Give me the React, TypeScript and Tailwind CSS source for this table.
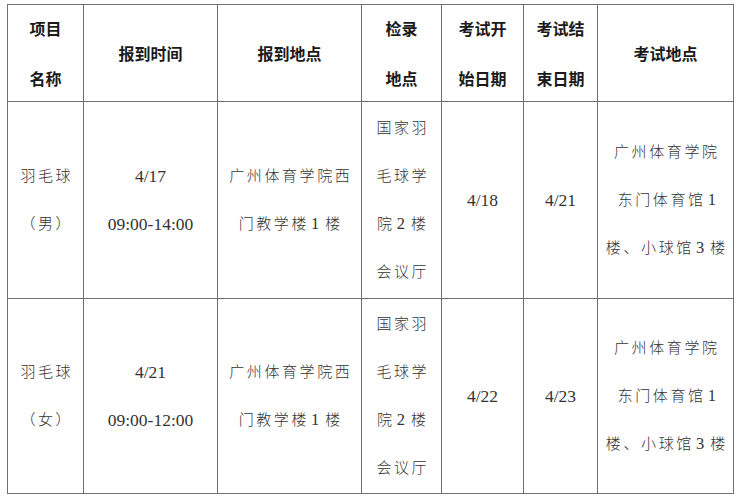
const serif = "[font-family:'Liberation_Serif','Noto_Sans_CJK_SC',serif]";

type Cell = { lines: string[]; num?: boolean };

const header: string[][] = [
  ["项目", "名称"],
  ["报到时间"],
  ["报到地点"],
  ["检录", "地点"],
  ["考试开", "始日期"],
  ["考试结", "束日期"],
  ["考试地点"],
];

const rows: Cell[][] = [
  [
    { lines: ["羽毛球", "（男）"] },
    { lines: ["4/17", "09:00-14:00"], num: true },
    { lines: ["广州体育学院西", "门教学楼 1 楼"] },
    { lines: ["国家羽", "毛球学", "院 2 楼", "会议厅"] },
    { lines: ["4/18"], num: true },
    { lines: ["4/21"], num: true },
    { lines: ["广州体育学院", "东门体育馆 1", "楼、小球馆 3 楼"] },
  ],
  [
    { lines: ["羽毛球", "（女）"] },
    { lines: ["4/21", "09:00-12:00"], num: true },
    { lines: ["广州体育学院西", "门教学楼 1 楼"] },
    { lines: ["国家羽", "毛球学", "院 2 楼", "会议厅"] },
    { lines: ["4/22"], num: true },
    { lines: ["4/23"], num: true },
    { lines: ["广州体育学院", "东门体育馆 1", "楼、小球馆 3 楼"] },
  ],
];

const widths = [76, 134, 144, 80, 82, 74, 136];

// digits inside Chinese text: Times-like, with a narrow gap either side
function Mixed({ text }: { text: string }) {
  const parts = text.split(" ").filter(Boolean);
  return (
    <span className="whitespace-nowrap">
      {parts.map((p, i) =>
        /^\d+$/.test(p) ? (
          <span
            key={i}
            className={`tracking-normal text-[16.5px] ml-[2px] ${i < parts.length - 1 ? "mr-[6px]" : ""}`}
          >
            {p}
          </span>
        ) : (
          <span key={i}>{p}</span>
        ),
      )}
    </span>
  );
}

export default function App() {
  return (
    <div className="w-[739px] h-[500px] bg-white pt-[4px] pl-[7px]">
      <table className="border-collapse table-fixed w-[726px]">
        <colgroup>
          {widths.map((w, i) => (
            <col key={i} style={{ width: w }} />
          ))}
        </colgroup>
        <thead>
          <tr className="h-[97px]">
            {header.map((lines, i) => (
              <th key={i} className="border border-[#707070] p-0 align-middle">
                <div className="flex flex-col items-center gap-[26px] [font-family:'Noto_Sans_CJK_SC',sans-serif] font-bold text-[16px] leading-[24px] text-[#1a1a1a]">
                  {lines.map((l) => (
                    <span key={l}>{l}</span>
                  ))}
                </div>
              </th>
            ))}
          </tr>
        </thead>
        <tbody>
          {rows.map((row, r) => (
            <tr key={r} className={r === 0 ? "h-[197px]" : "h-[195px]"}>
              {row.map((c, i) => (
                <td key={i} className="border border-[#707070] p-0 align-middle">
                  <div
                    className={`flex flex-col items-center gap-[24px] leading-[24px] text-[#333] ${serif} ${
                      c.num ? "text-[17.5px]" : "text-[15px] tracking-[2.6px] pl-[2.6px] font-light"
                    }`}
                  >
                    {c.lines.map((l) =>
                      c.num ? (
                        <span key={l} className="whitespace-nowrap">{l}</span>
                      ) : (
                        <Mixed key={l} text={l} />
                      ),
                    )}
                  </div>
                </td>
              ))}
            </tr>
          ))}
        </tbody>
      </table>
    </div>
  );
}
